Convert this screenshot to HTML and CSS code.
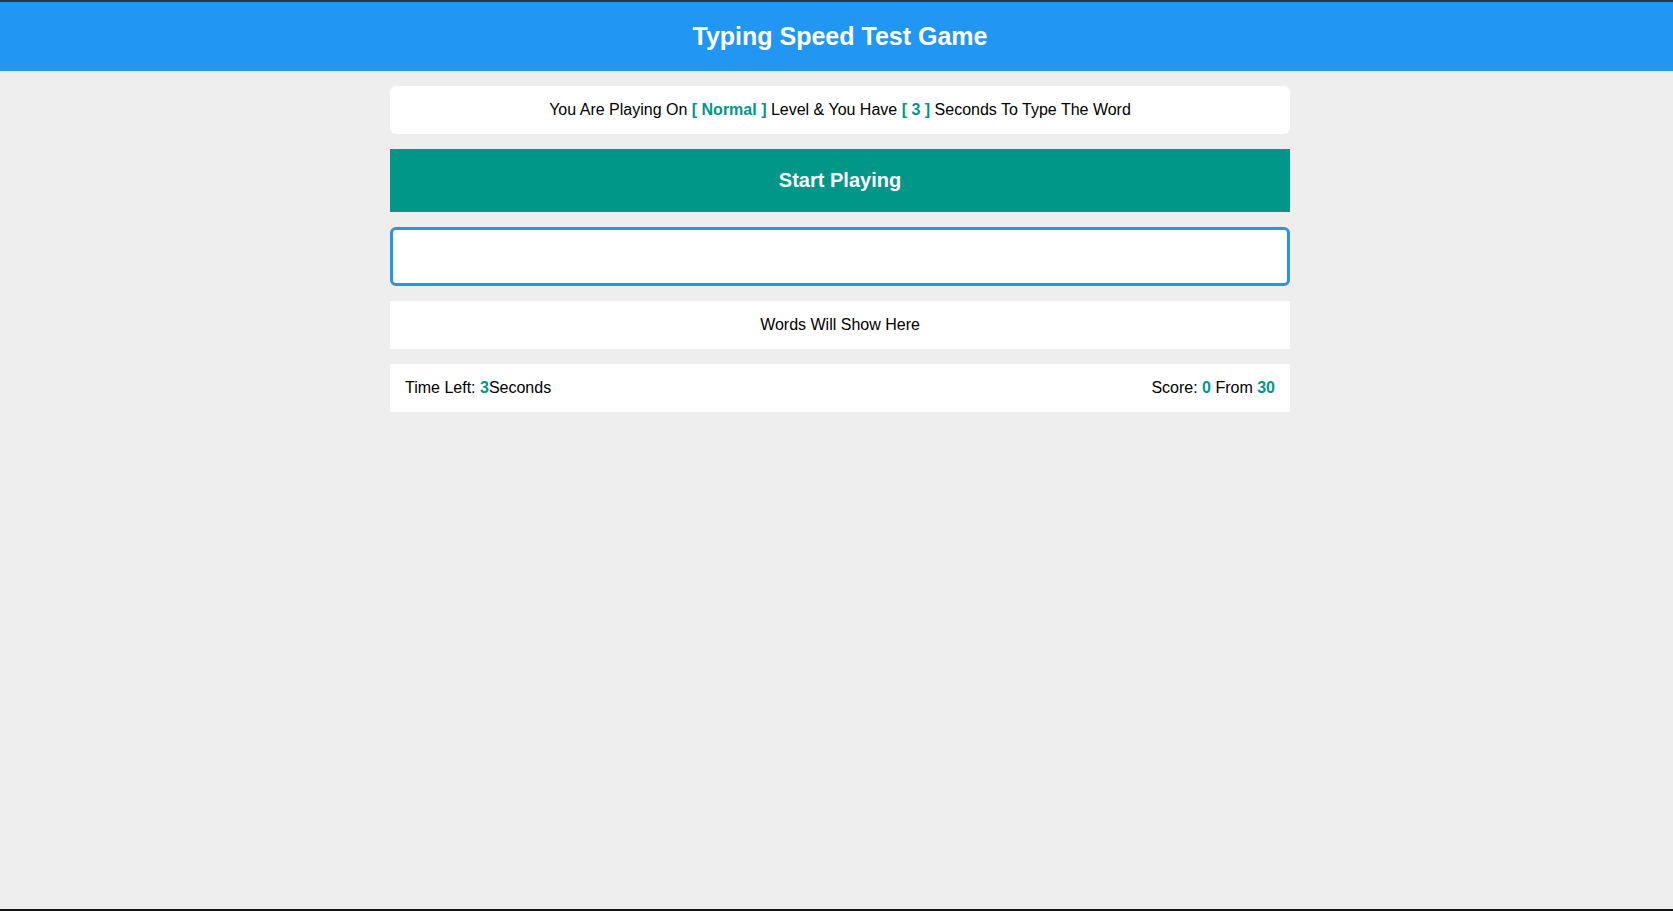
FILE: index.html
```html
<!DOCTYPE html>
<html lang="en">
<head>
<meta charset="UTF-8">
<title>Typing Speed Test Game</title>
<link rel="stylesheet" href="styles.css">
</head>
<body>
<div class="page">
  <header class="header">
    <h1 class="title">Typing Speed Test Game</h1>
  </header>
  <main class="main">
    <div class="game">
      <div class="message">You Are Playing On <span class="hl">[ Normal ]</span> Level &amp; You Have <span class="hl">[ 3 ]</span> Seconds To Type The Word</div>
      <div class="start">Start Playing</div>
      <input class="input" type="text">
      <div class="words">Words Will Show Here</div>
      <div class="control">
        <div class="time">Time Left: <span class="hl">3</span>Seconds</div>
        <div class="score">Score: <span class="hl">0</span> From <span class="hl">30</span></div>
      </div>
    </div>
  </main>
  <div class="bottom-bar"></div>
</div>
</body>
</html>
```

FILE: styles.css
```css
* { box-sizing: border-box; }
html, body { margin: 0; padding: 0; }
body {
  background: #eeeeee;
  font-family: "Liberation Sans", Arial, sans-serif;
  color: #000;
}
.page {
  min-height: 100vh;
  display: flex;
  flex-direction: column;
  border-top: 2px solid #343434;
}
.header {
  background: #2196f3;
  padding: 21px 0 21px 7px;
  text-align: center;
}
.title {
  margin: 0;
  color: #fff;
  font-size: 25px;
  line-height: 27px;
  font-weight: bold;
}
.main {
  flex: 1;
  padding-left: 7px;
}
.game {
  width: 900px;
  margin: 15px auto 0;
  display: flex;
  flex-direction: column;
  gap: 15px;
}
.message {
  background: #fff;
  border-radius: 6px;
  padding: 15px;
  text-align: center;
  font-size: 16px;
  line-height: 18px;
}
.hl {
  color: #009688;
  font-weight: bold;
}
.start {
  background: #009688;
  color: #fff;
  font-weight: bold;
  font-size: 20px;
  line-height: 23px;
  padding: 20px;
  text-align: center;
}
.input {
  display: block;
  width: 100%;
  height: 59px;
  border: 3px solid #2196f3;
  border-radius: 6px;
  background: #fff;
  outline: none;
  font-family: inherit;
  font-size: 16px;
  margin: 0;
  padding: 0 12px;
}
.words {
  background: #fff;
  padding: 15px;
  text-align: center;
  font-size: 16px;
  line-height: 18px;
}
.control {
  background: #fff;
  padding: 15px;
  display: flex;
  justify-content: space-between;
  font-size: 16px;
  line-height: 18px;
}
.bottom-bar {
  height: 2px;
  background: #141414;
}
```
